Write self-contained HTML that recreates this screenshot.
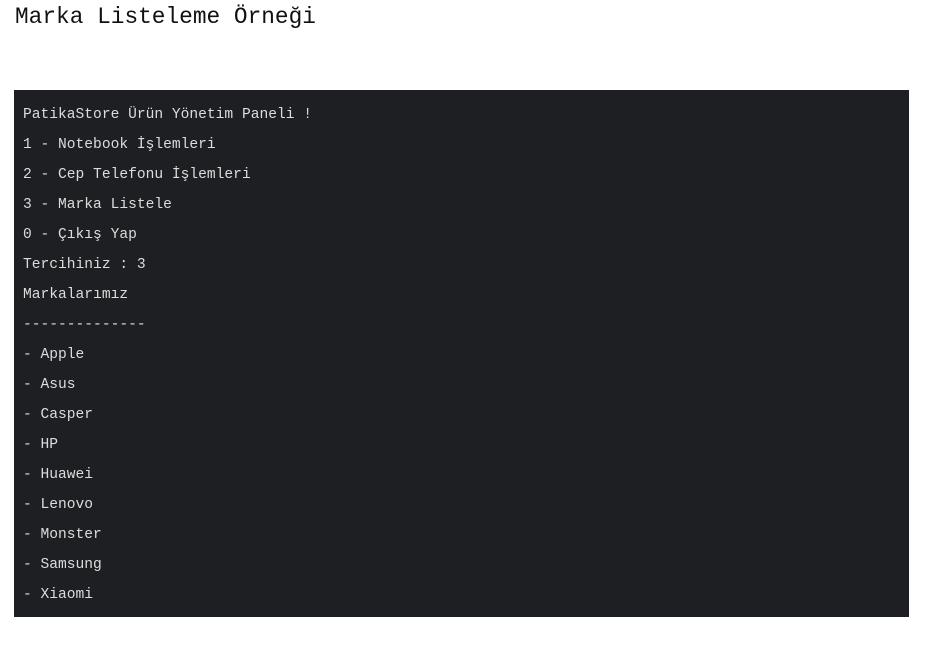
<!DOCTYPE html>
<html><head><meta charset="utf-8"><style>
body{margin:0;background:#fff;width:927px;height:647px;overflow:hidden}
h1{position:absolute;left:15px;top:0;margin:0;font:normal 22.8px/34px "Liberation Mono","DejaVu Sans Mono",monospace;color:#111}
pre{position:absolute;left:14px;top:90px;width:895px;height:527px;margin:0;background:#1e1f23;color:#dcdcdc;font:14.6px/30px "Liberation Mono","DejaVu Sans Mono",monospace;padding:10px 0 0 9px;box-sizing:border-box}
</style></head><body>
<h1>Marka Listeleme Örneği</h1>
<pre>PatikaStore Ürün Yönetim Paneli !
1 - Notebook İşlemleri
2 - Cep Telefonu İşlemleri
3 - Marka Listele
0 - Çıkış Yap
Tercihiniz : 3
Markalarımız
--------------
- Apple
- Asus
- Casper
- HP
- Huawei
- Lenovo
- Monster
- Samsung
- Xiaomi</pre>
</body></html>
